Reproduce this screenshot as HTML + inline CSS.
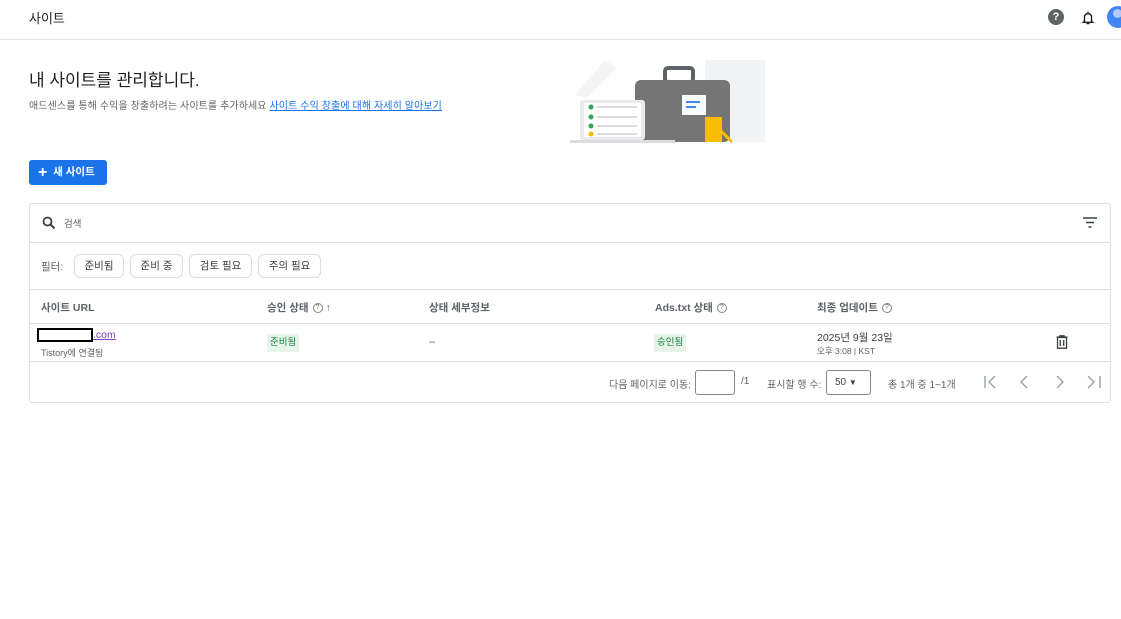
<!DOCTYPE html>
<html><head><meta charset="utf-8"><style>
*{margin:0;padding:0;box-sizing:border-box}
body{width:1121px;height:619px;background:#fff;font-family:"Liberation Sans","Noto Sans CJK KR",sans-serif;color:#3c4043;position:relative;overflow:hidden}
.a{position:absolute;white-space:nowrap}
.chip{position:absolute;top:254px;height:24px;border:1px solid #dadce0;border-radius:6px;font-size:10.5px;line-height:22px;text-align:center;color:#3c4043}
.th{position:absolute;top:300px;font-size:10.5px;font-weight:bold;color:#5f6368}
.q{display:inline-block;width:10px;height:10px;border:1px solid #80868b;border-radius:50%;font-size:7px;line-height:8px;text-align:center;vertical-align:middle;margin-left:4px;font-weight:normal}
.badge{position:absolute;background:#e6f4ea;color:#188038;font-size:9.5px;height:18px;line-height:18px;padding:0 3px}
</style></head><body>
<div class="a" style="left:29px;top:8px;font-size:13px;color:#202124">사이트</div>
<div class="a" style="left:0;top:39px;width:1121px;height:1px;background:#e0e0e0"></div>
<div class="a" style="left:1048px;top:9px;width:16px;height:16px;border-radius:50%;background:#5f6368;color:#fff;font-size:11px;font-weight:bold;text-align:center;line-height:16px">?</div>
<svg class="a" style="left:1081px;top:10px" width="14" height="15" viewBox="0 0 14 15"><path d="M7 1.5v1M3.5 11V7a3.5 3.5 0 0 1 7 0v4l1.2 1.3H2.3z" fill="none" stroke="#202124" stroke-width="1.4"/><path d="M5.5 13.5h3" stroke="#202124" stroke-width="1.4"/></svg>
<div class="a" style="left:1107px;top:6px;width:22px;height:22px;border-radius:50%;background:#4285f4;overflow:hidden"><div style="position:absolute;left:6px;top:3px;width:9px;height:9px;border-radius:50%;background:#aecbfa"></div></div>

<div class="a" style="left:29px;top:66px;font-size:17px;color:#202124">내 사이트를 관리합니다.</div>
<div class="a" style="left:29px;top:97px;font-size:10px;letter-spacing:0.1px;color:#5f6368">애드센스를 통해 수익을 창출하려는 사이트를 추가하세요 <span style="color:#1a73e8;text-decoration:underline">사이트 수익 창출에 대해 자세히 알아보기</span></div>

<svg class="a" style="left:565px;top:55px" width="210" height="90" viewBox="0 0 210 90">
<rect x="140" y="5" width="60" height="82" fill="#f1f3f4"/>
<path d="M10 40L40 5l12 8-30 30z" fill="#f5f5f5"/>
<rect x="100" y="13" width="28" height="14" rx="3" fill="none" stroke="#5f6368" stroke-width="4"/>
<rect x="70" y="25" width="95" height="62" rx="6" fill="#757575"/>
<rect x="117" y="40" width="24" height="20" fill="#f8f9fa"/><rect x="121" y="46" width="14" height="2" fill="#4285f4"/><rect x="121" y="51" width="10" height="2" fill="#4285f4"/>
<rect x="15" y="45" width="65" height="40" rx="3" fill="#e8eaed"/><rect x="19" y="48" width="57" height="34" fill="#fff"/>
<circle cx="26" cy="52" r="2.5" fill="#34a853"/><circle cx="26" cy="62" r="2.5" fill="#34a853"/><circle cx="26" cy="71" r="2.5" fill="#34a853"/><circle cx="26" cy="79" r="2.5" fill="#fbbc04"/>
<rect x="32" y="51" width="40" height="2" fill="#dadce0"/><rect x="32" y="61" width="40" height="2" fill="#dadce0"/><rect x="32" y="70" width="40" height="2" fill="#dadce0"/><rect x="32" y="78" width="40" height="2" fill="#dadce0"/>
<rect x="5" y="85" width="105" height="3" fill="#dadce0"/>
<rect x="140" y="62" width="17" height="25" fill="#fbbc04"/><path d="M155 75l12 12" stroke="#fbbc04" stroke-width="3"/>
</svg>

<div class="a" style="left:29px;top:160px;width:78px;height:25px;background:#1a73e8;border-radius:3px;color:#fff;font-size:10.5px;font-weight:bold;line-height:25px;padding-left:9px"><span style="font-size:16px;vertical-align:-2px;font-weight:bold">+</span>&nbsp; 새 사이트</div>

<div class="a" style="left:29px;top:203px;width:1082px;height:200px;border:1px solid #e0e0e0;border-radius:3px"></div>
<svg class="a" style="left:42px;top:216px" width="14" height="14" viewBox="0 0 14 14"><circle cx="5.5" cy="5.5" r="4" fill="none" stroke="#3c4043" stroke-width="1.8"/><path d="M8.5 8.5l4 4" stroke="#3c4043" stroke-width="2"/></svg>
<div class="a" style="left:64px;top:216px;font-size:9.5px;color:#5f6368">검색</div>
<svg class="a" style="left:1083px;top:217px" width="14" height="11" viewBox="0 0 14 11"><path d="M0 1h14M3 5.5h8M5.5 10h3" stroke="#3c4043" stroke-width="1.5"/></svg>
<div class="a" style="left:30px;top:242px;width:1080px;height:1px;background:#e0e0e0"></div>
<div class="a" style="left:41px;top:259px;font-size:10.5px;color:#5f6368">필터:</div>
<div class="chip" style="left:74px;width:50px">준비됨</div>
<div class="chip" style="left:130px;width:53px">준비 중</div>
<div class="chip" style="left:189px;width:63px">검토 필요</div>
<div class="chip" style="left:258px;width:63px">주의 필요</div>
<div class="a" style="left:30px;top:289px;width:1080px;height:1px;background:#e0e0e0"></div>
<div class="th" style="left:41px">사이트 URL</div>
<div class="th" style="left:267px">승인 상태<span class="q">?</span> <span style="font-weight:normal">↑</span></div>
<div class="th" style="left:429px">상태 세부정보</div>
<div class="th" style="left:655px">Ads.txt 상태<span class="q">?</span></div>
<div class="th" style="left:817px">최종 업데이트<span class="q">?</span></div>
<div class="a" style="left:30px;top:323px;width:1080px;height:1px;background:#e0e0e0"></div>
<div class="a" style="left:37px;top:328px;width:56px;height:14px;background:#000;border:2px solid #000"><div style="background:#fff;height:100%"></div></div>
<div class="a" style="left:93px;top:329px;font-size:10.5px;color:#7b3fbf;text-decoration:underline">.com</div>
<div class="a" style="left:41px;top:346px;font-size:9px;color:#5f6368">Tistory에 연결됨</div>
<div class="badge" style="left:267px;top:334px">준비됨</div>
<div class="a" style="left:429px;top:336px;font-size:11px;color:#5f6368">–</div>
<div class="badge" style="left:654px;top:334px">승인됨</div>
<div class="a" style="left:817px;top:330px;font-size:10.5px;color:#3c4043">2025년 9월 23일</div>
<div class="a" style="left:817px;top:345px;font-size:8.5px;color:#5f6368">오후 3:08 | KST</div>
<svg class="a" style="left:1056px;top:335px" width="12" height="14" viewBox="0 0 12 14"><path d="M0.5 2h11M4 2V0.8h4V2M1.5 2.5h9V13.2h-9zM4.3 5v6M7.7 5v6" fill="none" stroke="#3c4043" stroke-width="1.3"/></svg>
<div class="a" style="left:30px;top:361px;width:1080px;height:1px;background:#e0e0e0"></div>
<div class="a" style="left:609px;top:376px;font-size:10px;color:#5f6368">다음 페이지로 이동:</div>
<div class="a" style="left:695px;top:370px;width:40px;height:25px;border:1px solid #80868b;border-radius:3px"></div>
<div class="a" style="left:741px;top:376px;font-size:10px;color:#5f6368">/1</div>
<div class="a" style="left:767px;top:376px;font-size:10px;color:#5f6368">표시할 행 수:</div>
<div class="a" style="left:826px;top:370px;width:45px;height:25px;border:1px solid #80868b;border-radius:3px;font-size:10px;line-height:23px;padding-left:8px;color:#3c4043">50 <span style="font-size:8px">▼</span></div>
<div class="a" style="left:888px;top:376px;font-size:10px;color:#5f6368">총 1개 중 1~1개</div>
<svg class="a" style="left:983px;top:375px" width="120" height="14" viewBox="0 0 120 14"><g fill="none" stroke="#9aa0a6" stroke-width="1.4"><path d="M2 1v12M12 1L6 7l6 6M44 1l-6 6 6 6M74 1l6 6-6 6M105 1l6 6-6 6M117 1v12"/></g></svg>
</body></html>
